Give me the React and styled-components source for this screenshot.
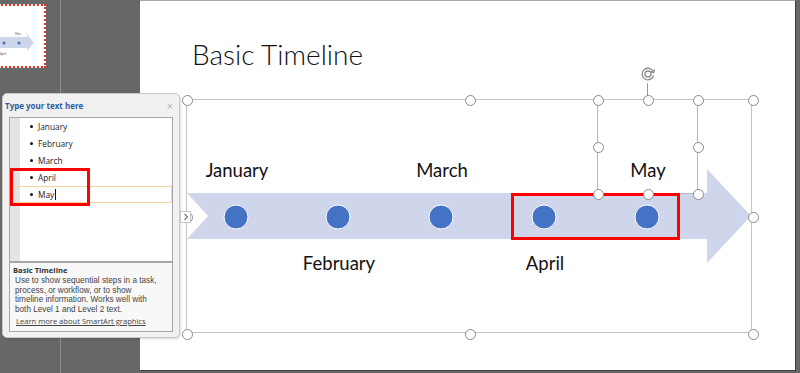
import React from 'react';
import styled, { createGlobalStyle } from 'styled-components';

const GlobalStyle = createGlobalStyle`
  html, body {
    margin: 0;
    padding: 0;
  }
  body {
    width: 800px;
    height: 373px;
    overflow: hidden;
    background: #676767;
    font-family: 'Open Sans', 'Noto Sans', sans-serif;
  }
`;

const items = ['January', 'February', 'March', 'April', 'May'];

const nodes = [
  { label: 'January', x: 50, top: true },
  { label: 'February', x: 152, top: false },
  { label: 'March', x: 255, top: true },
  { label: 'April', x: 358, top: false },
  { label: 'May', x: 461, top: true },
];

const frameHandles = [
  [0, 0], [283, 0], [566, 0],
  [0, 117], [566, 117],
  [0, 234], [283, 234], [566, 234],
];

const boxHandles = [
  [411, 0], [461, 0], [511, 0],
  [411, 47], [511, 47],
  [411, 94], [461, 94], [511, 94],
];

const descLines = [
  'Use to show sequential steps in a task,',
  'process, or workflow, or to show',
  'timeline information. Works well with',
  'both Level 1 and Level 2 text.',
];

const App = () => {
  return (
    <Window>
      <GlobalStyle />
      <ThumbPane>
        <Thumb>
          <svg width="44" height="60" viewBox="0 0 44 60">
            <polygon points="0,31 27,31 27,28 34,37 27,45 27,42 0,42" fill="#d0d6ea" />
            <circle cx="4" cy="37" r="1.6" fill="#4472c4" />
            <circle cx="19" cy="37" r="1.6" fill="#4472c4" />
            <text x="15" y="29" fontSize="3" fill="#555" fontFamily="Lato">May</text>
            <text x="0" y="49" fontSize="3" fill="#555" fontFamily="Lato">April</text>
          </svg>
        </Thumb>
      </ThumbPane>

      <Editor>
        <Slide>
          <SlideTitle>Basic Timeline</SlideTitle>
          <Frame>
            <svg width="566" height="234" viewBox="0 0 566 234">
              <polygon
                points="1,94 521,94 521,70 565,117 521,164 521,140 1,140 22,117"
                fill="#cfd5ea"
              />
              {nodes.map((n) => (
                <circle key={n.label} cx={n.x} cy="118" r="12" fill="#4472c4" stroke="#ffffff" strokeWidth="1" />
              ))}
            </svg>
            {nodes.map((n) => (
              <NodeLabel key={n.label} $x={n.x} $top={n.top}>
                {n.label}
              </NodeLabel>
            ))}
            <SelectedBox />
            <RedBox />
            <RotateStem />
            <RotateIcon>
              <svg width="16" height="16" viewBox="0 0 16 16" fill="none" stroke="#8a8a8a" strokeWidth="1.3">
                <path d="M13.4 6 A5.8 5.8 0 1 0 13.6 9.5" />
                <circle cx="8" cy="8" r="3" />
                <path d="M14.6 3.4 L13.6 6.6 L10.5 5.6" />
              </svg>
            </RotateIcon>
            {frameHandles.concat(boxHandles).map(([x, y], i) => (
              <Handle key={i} style={{ left: x, top: y }} />
            ))}
          </Frame>
        </Slide>
      </Editor>

      <TextPane>
        <PaneHeader>
          <PaneTitle>Type your text here</PaneTitle>
          <CloseMark>×</CloseMark>
        </PaneHeader>
        <ListBox>
          {items.map((item, i) => (
            <ListRow key={item} $active={i === items.length - 1}>
              <Bullet />
              <span>{item}</span>
              {i === items.length - 1 && <Caret />}
            </ListRow>
          ))}
          <ListMark />
        </ListBox>
        <DescBox>
          <DescTitle>Basic Timeline</DescTitle>
          <DescText>
            {descLines.map((line) => (
              <DescLine key={line}>{line}</DescLine>
            ))}
          </DescText>
          <LearnLink>Learn more about SmartArt graphics</LearnLink>
        </DescBox>
      </TextPane>
      <ExpandButton>
        <svg width="6" height="8" viewBox="0 0 6 8" fill="none" stroke="#777" strokeWidth="1.1">
          <path d="M1.5 1 L4.5 4 L1.5 7" />
        </svg>
      </ExpandButton>
    </Window>
  );
};

export default App;

const Window = styled.div`
  position: relative;
  display: flex;
  width: 800px;
  height: 373px;
  background: #676767;
  overflow: hidden;
`;

const ThumbPane = styled.div`
  width: 61px;
  flex: none;
  box-sizing: border-box;
  border-right: 1px solid #8e8e8e;
  padding-top: 4px;
`;

const Thumb = styled.div`
  width: 44px;
  height: 60px;
  margin-left: -2px;
  background: #ffffff;
  border: 2px dotted #e2312b;
  overflow: hidden;
`;

const Editor = styled.div`
  flex: 1;
  padding-left: 79px;
`;

const Slide = styled.div`
  position: relative;
  width: 655px;
  height: 370px;
  background: #ffffff;
  box-shadow: inset 0 1px 0 #a9a9a9, 1px 1px 0 #3c3c3c;
`;

const SlideTitle = styled.h1`
  margin: 0;
  padding: 36px 0 0 52px;
  font-family: 'Lato', sans-serif;
  font-weight: 300;
  font-size: 28px;
  line-height: 36px;
  color: #111111;
`;

const Frame = styled.div`
  position: absolute;
  left: 46px;
  top: 99px;
  width: 566px;
  height: 234px;
  border: 1px solid #c4c4c4;
  box-sizing: border-box;

  & > svg {
    position: absolute;
    left: -1px;
    top: -1px;
  }
`;

const NodeLabel = styled.div`
  position: absolute;
  left: ${(p) => p.$x - 60}px;
  top: ${(p) => (p.$top ? 59 : 152)}px;
  width: 120px;
  text-align: center;
  font-family: 'Lato', sans-serif;
  font-size: 18.5px;
  line-height: 22px;
  color: #111111;
`;

const SelectedBox = styled.div`
  position: absolute;
  left: 410px;
  top: -1px;
  width: 101px;
  height: 95px;
  border: 1px solid #b8b8b8;
  border-top: none;
  box-sizing: border-box;
`;

const RedBox = styled.div`
  position: absolute;
  left: 324px;
  top: 93px;
  width: 169px;
  height: 47px;
  border: 3px solid #ff0000;
  box-sizing: border-box;
`;

const RotateStem = styled.div`
  position: absolute;
  left: 460px;
  top: -17px;
  width: 1px;
  height: 17px;
  background: #9a9a9a;
`;

const RotateIcon = styled.div`
  position: absolute;
  left: 453px;
  top: -34px;
  width: 16px;
  height: 16px;

  svg {
    display: block;
  }
`;

const Handle = styled.div`
  position: absolute;
  width: 9px;
  height: 9px;
  margin: -5.5px 0 0 -5.5px;
  border: 1px solid #8a8a8a;
  border-radius: 50%;
  background: #ffffff;
`;

const TextPane = styled.div`
  position: absolute;
  left: 2px;
  top: 93px;
  width: 178px;
  height: 245px;
  box-sizing: border-box;
  background: #f1f1f1;
  border: 1px solid #c9c9c9;
  border-radius: 5px;
  box-shadow: 1px 1px 2px rgba(0, 0, 0, 0.15);
`;

const PaneHeader = styled.div`
  display: flex;
  align-items: center;
  justify-content: space-between;
  height: 23px;
  padding: 0 6px 0 2px;
`;

const PaneTitle = styled.span`
  font-size: 8px;
  font-weight: 700;
  color: #2e5d9e;
`;

const CloseMark = styled.span`
  font-size: 11px;
  color: #b5b5b5;
`;

const ListBox = styled.div`
  position: relative;
  width: 164px;
  height: 145px;
  margin-left: 6px;
  box-sizing: border-box;
  border: 1px solid #a6a6a6;
  background: linear-gradient(to right, #e4e4e7 10px, #ffffff 10px);
`;

const ListRow = styled.div`
  display: flex;
  align-items: center;
  height: 17px;
  box-sizing: border-box;
  padding-left: 20px;
  font-size: 8.3px;
  color: #1a1a1a;
  border: 1px solid ${(p) => (p.$active ? '#f3d4a2' : 'transparent')};
  border-left: none;
`;

const Bullet = styled.span`
  width: 3px;
  height: 3px;
  margin-right: 5px;
  border-radius: 50%;
  background: #111111;
`;

const Caret = styled.span`
  width: 1px;
  height: 11px;
  margin-left: 0.5px;
  background: #111111;
`;

const ListMark = styled.div`
  position: absolute;
  left: 0px;
  top: 50px;
  width: 80px;
  height: 38px;
  box-sizing: border-box;
  border: 3px solid #ff0000;
`;

const DescBox = styled.div`
  width: 164px;
  height: 70px;
  margin-left: 6px;
  box-sizing: border-box;
  border: 1px solid #a6a6a6;
  background: #f8f8f8;
  padding: 2px 4px 0 3px;
`;

const DescTitle = styled.div`
  font-size: 7.6px;
  font-weight: 700;
  line-height: 11px;
  color: #333333;
`;

const DescText = styled.div`
  padding-left: 2px;
  font-family: 'Liberation Sans', Arial, sans-serif;
  font-size: 8.2px;
  line-height: 9.5px;
  color: #444444;
`;

const DescLine = styled.div`
  white-space: nowrap;
`;

const LearnLink = styled.div`
  margin-top: 2.5px;
  padding-left: 3px;
  font-size: 7.6px;
  line-height: 9px;
  color: #444444;
  text-decoration: underline;
`;

const ExpandButton = styled.div`
  position: absolute;
  left: 180px;
  top: 211px;
  width: 11px;
  height: 12px;
  box-sizing: border-box;
  display: flex;
  align-items: center;
  justify-content: center;
  background: #ffffff;
  border: 1px solid #c6c6c6;
`;
